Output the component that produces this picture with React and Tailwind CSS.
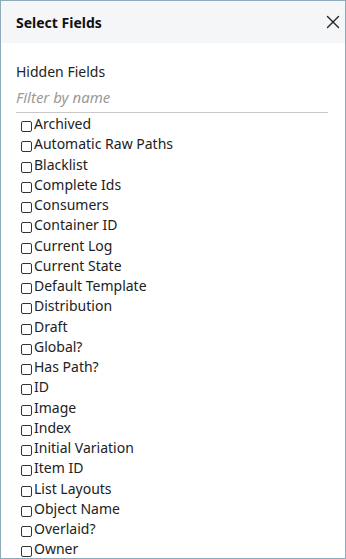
import { X } from 'lucide-react';

const fields = [
  'Archived',
  'Automatic Raw Paths',
  'Blacklist',
  'Complete Ids',
  'Consumers',
  'Container ID',
  'Current Log',
  'Current State',
  'Default Template',
  'Distribution',
  'Draft',
  'Global?',
  'Has Path?',
  'ID',
  'Image',
  'Index',
  'Initial Variation',
  'Item ID',
  'List Layouts',
  'Object Name',
  'Overlaid?',
  'Owner',
  'Parent',
  'Path',
];

export default function App() {
  return (
    <div
      className="w-[346px] h-[559px] overflow-hidden bg-white border-[1.5px] border-[#8fabb9] text-[#222]"
      style={{ fontFamily: '"Noto Sans", "Open Sans", sans-serif' }}
    >
      {/* Header */}
      <div className="h-[42px] bg-[#f5f6f7] flex items-center justify-between pl-[15px] pr-[1px]">
        <span className="text-[14px] font-bold text-[#111]">Select Fields</span>
        <button className="w-[22px] h-[22px] flex items-center justify-center text-[#222]">
          <X className="w-[22px] h-[22px]" strokeWidth={1.5} />
        </button>
      </div>

      {/* Body */}
      <div className="pl-[15px] pr-[17px] pt-[19px]">
        <div className="text-[14px] leading-[20px] text-[#222]">Hidden Fields</div>
        <input
          type="text"
          placeholder="Filter by name"
          className="mt-[4px] w-full h-[27px] pb-[4px] border-b border-[#c8c8c8] text-[15px] italic outline-none placeholder:text-[#9a9a9a] placeholder:italic"
        />
        <ul className="pl-[5px] pt-[1px]">
          {fields.map((f) => (
            <li key={f} className="flex items-center text-[14px] leading-[20.25px] text-[#222]">
              <span className="w-[11px] h-[11px] border border-[#333] rounded-[2px] mr-[2px] mt-[5px] shrink-0" />
              {f}
            </li>
          ))}
        </ul>
      </div>
    </div>
  );
}
